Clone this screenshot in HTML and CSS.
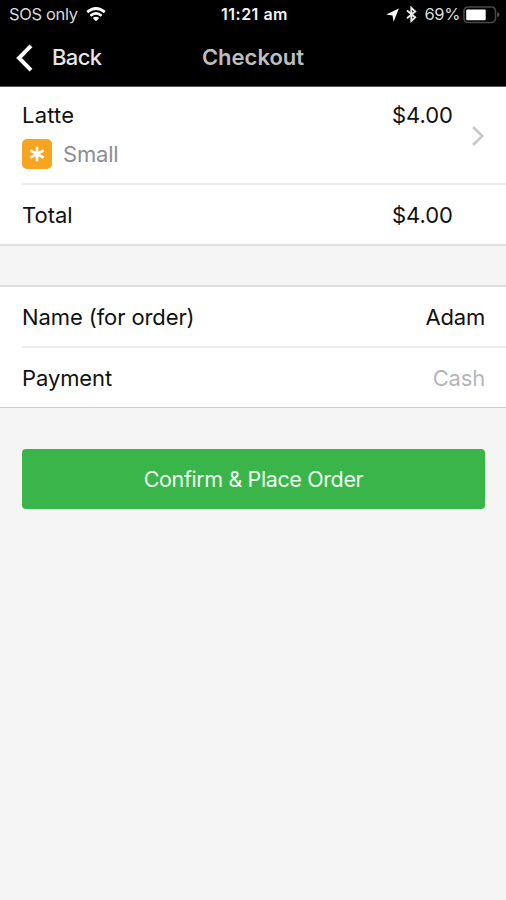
FILE: index.html
```html
<!DOCTYPE html>
<html lang="en">
<head>
<meta charset="utf-8">
<title>Checkout</title>
<link rel="stylesheet" href="styles.css">
</head>
<body>
<header class="top">
  <div class="status">
    <div class="status-left">
      <span class="carrier">SOS only</span>
      <svg class="wifi" width="20" height="15" viewBox="0 0 20 15" fill="none" stroke="#fff" stroke-width="2.7">
        <path d="M1.2 5.1Q10-2.1 18.8 5.1M4.4 8.7Q10 4.1 15.6 8.7"/>
        <path d="M6.8 10.9Q10 8.4 13.2 10.9L10 14.2Z" fill="#fff" stroke="none"/>
      </svg>
    </div>
    <span class="clock">11:21 am</span>
    <div class="status-right">
      <svg class="location" width="13" height="14" viewBox="0 0 13 14"><path d="M12.9.4L7.6 13.8 6.5 7.4.2 6.6Z" fill="#fff"/></svg>
      <svg class="bluetooth" width="11" height="17" viewBox="0 0 11 17"><path d="M1 4.6L9.2 11.4 5.3 15V1.8L9.2 5.4 1 12.2" fill="none" stroke="#e8e8e8" stroke-width="1.9"/></svg>
      <span class="percent">69%</span>
      <svg class="battery" width="37" height="18" viewBox="0 0 37 18"><rect x="1" y="1" width="31.5" height="15.5" rx="4" fill="none" stroke="#484848" stroke-width="1.6"/><rect x="3.2" y="3.4" width="19.5" height="10.8" rx="1" fill="#fff"/><path d="M34.2 6.3Q36.5 7 36.5 8.8T34.2 11.3Z" fill="#555"/></svg>
    </div>
  </div>
  <nav class="nav">
    <a class="back"><svg width="18" height="28" viewBox="0 0 18 28"><path d="M16 1.8L4 14 16 26.2" fill="none" stroke="#fff" stroke-width="4"/></svg><span class="back-text">Back</span></a>
    <h1 class="title">Checkout</h1>
  </nav>
</header>
<main>
  <section class="group order">
    <div class="row item">
      <div class="item-info">
        <span class="latte">Latte</span>
        <div class="size">
          <span class="badge"><svg width="16" height="16" viewBox="0 0 16 16"><path d="M8 .8V15.2M1.3 4.4L14.7 11.6M14.7 4.4L1.3 11.6" stroke="#fff" stroke-width="2.7"/></svg></span>
          <span class="small">Small</span>
        </div>
      </div>
      <span class="price">$4.00</span>
      <svg class="chevron" width="14" height="22" viewBox="0 0 14 22"><path d="M2 2L11.2 11 2 20" fill="none" stroke="#c9c9cb" stroke-width="2.6"/></svg>
    </div>
    <div class="row total"><span class="total-label">Total</span><span class="price">$4.00</span></div>
  </section>
  <section class="group details">
    <div class="row name"><span class="name-label">Name (for order)</span><span class="adam">Adam</span></div>
    <div class="row payment"><span class="payment-label">Payment</span><span class="cash">Cash</span></div>
  </section>
  <button class="confirm"><span>Confirm &amp; Place Order</span></button>
</main>
</body>
</html>
```

FILE: styles.css
```css
* { box-sizing: border-box; }
body {
  margin: 0;
  min-height: 900px;
  background: #f5f5f5;
  color: #111;
  font: 400 22px/30px Inter, "Liberation Sans", sans-serif;
  white-space: nowrap;
}
svg { display: block; flex: none; }
.top { height: 87px; background: #000; border-bottom: 1px solid #5b5b5b; color: #f2f2f2; }
.status {
  display: grid;
  grid-template-columns: 1fr auto 1fr;
  align-items: center;
  height: 29px;
  padding: 0 6px 0 9px;
  font-size: 16.5px;
  line-height: 29px;
}
.status-left, .status-right { display: flex; align-items: center; }
.status-left { gap: 8px; color: #d8d8d8; }
.status-right { justify-content: flex-end; color: #ddd; }
.wifi { margin-top: -1px; }
.carrier { letter-spacing: -.35px; }
.clock { font-weight: 600; font-size: 16px; letter-spacing: .5px; }
.bluetooth { margin: 0 8px 0 7px; }
.percent { margin-right: 3px; letter-spacing: -.4px; }
.nav { display: grid; grid-template-columns: 1fr auto 1fr; align-items: center; height: 55px; padding: 0 15px; }
.back { display: flex; align-items: center; gap: 19px; font-weight: 500; color: #e6e6e6; }
.back-text { letter-spacing: -.6px; }
.title { margin: 0; font-size: 22px; font-weight: 600; color: #bebebe; }
.back svg { margin-top: 2px; }
.group { background: #fff; }
.row { display: flex; justify-content: space-between; margin-left: 22px; }
.order { height: 159px; border-bottom: 2px solid #e1e1e1; }
.item { height: 98px; padding: 13px 21px 0 0; border-bottom: 2px solid #ebebeb; }
.item-info { flex: 1; }
.latte { display: block; letter-spacing: .2px; }
.size { display: flex; align-items: center; gap: 11px; margin-top: 9px; color: #8b8e94; }
.small { letter-spacing: -.2px; }
.badge { display: grid; place-items: center; width: 30px; height: 30px; border-radius: 5px; background: #f5a51f; }
.chevron { margin: 25px 0 0 18px; }
.total { height: 59px; align-items: center; padding-right: 53px; }
.details { margin-top: 39px; height: 123px; border-top: 2px solid #dedede; border-bottom: 1px solid #cfcfcf; }
.name, .payment { align-items: center; height: 59px; padding-right: 21px; }
.name { height: 61px; padding-top: 1px; border-bottom: 2px solid #ebebeb; }
.name-label, .payment-label { letter-spacing: -.1px; }
.adam, .cash { letter-spacing: -.2px; }
.cash { color: #b5b6ba; }
.confirm {
  display: flex;
  align-items: center;
  justify-content: center;
  width: 463px;
  height: 60px;
  margin: 41px 0 0 22px;
  padding: 0;
  border: 0;
  border-radius: 4px;
  background: #3ab54a;
  color: #effff0;
  font: inherit;
  font-size: 21.5px;
  letter-spacing: -.38px;
}
```
